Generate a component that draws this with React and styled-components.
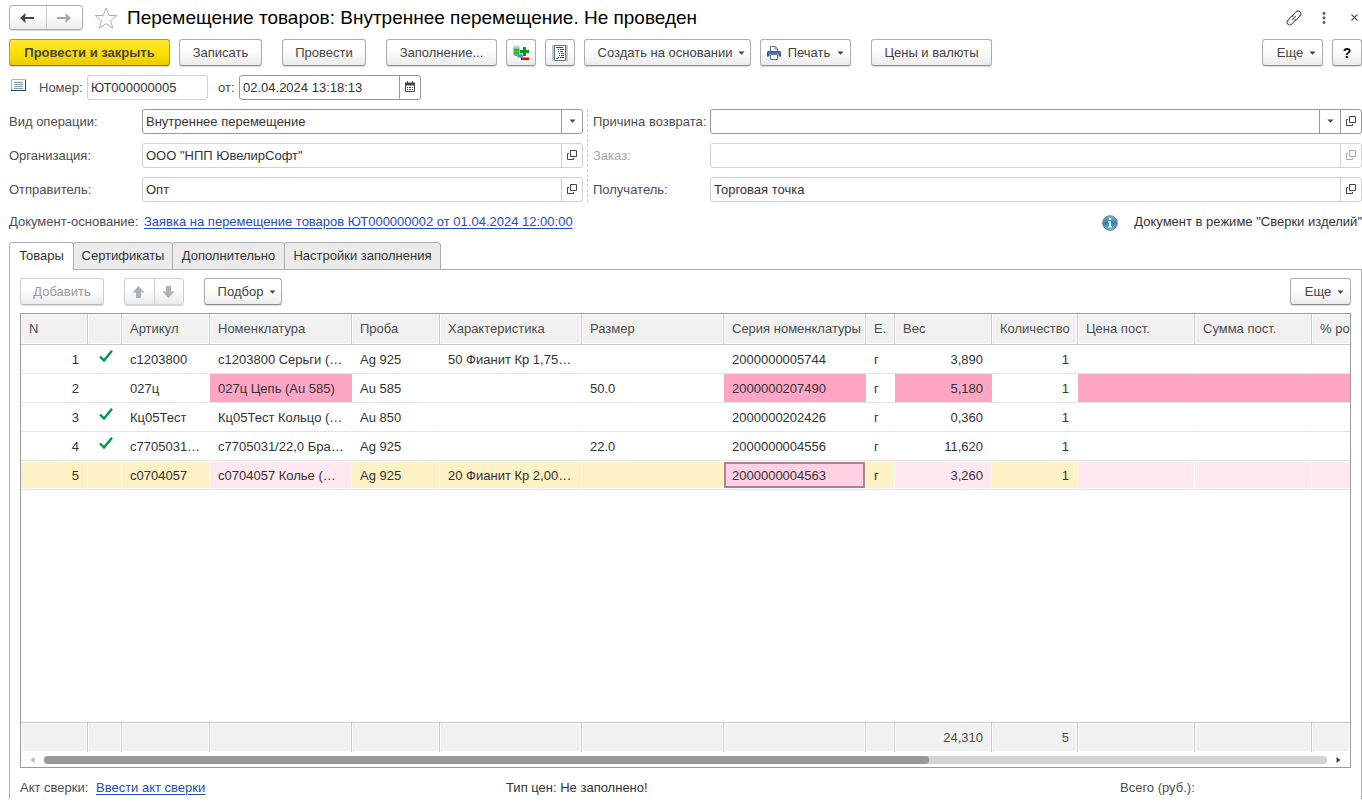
import styled, { createGlobalStyle, css } from "styled-components";

const GlobalStyle = createGlobalStyle`
	* {
		box-sizing: border-box;
	}
	body {
		margin: 0;
		background: #fff;
		color: #333;
		font-family: "Liberation Sans", Arial, sans-serif;
		font-size: 13px;
		line-height: 16px;
	}
	button, input, select {
		font: inherit;
		color: inherit;
		margin: 0;
	}
	svg {
		display: block;
		flex: none;
	}
`;

const Page = styled.main`
	min-height: 100vh;
	display: flex;
	flex-direction: column;
	padding: 5px 0 9px 9px;
`;

const TitleBar = styled.header`
	display: flex;
	align-items: center;
	height: 25px;
`;

const Title = styled.h1`
	flex: 1;
	margin: 0 0 0 9px;
	color: #000;
	font-size: 19px;
	line-height: 24px;
	font-weight: 400;
	white-space: nowrap;
`;

const IconButton = styled.button`
	display: flex;
	align-items: center;
	justify-content: center;
	width: 30px;
	height: 24px;
	padding: 0;
	border: 0;
	background: none;
`;

const StarButton = styled(IconButton)`
	width: 24px;
	margin-left: 11px;
`;

const CloseButton = styled(IconButton)`
	width: 23px;
	padding-left: 7px;
`;

const Bar = styled.div`
	display: flex;
	gap: 9px;
	margin-top: ${(props) => props.$top}px;
`;

const buttonLook = css`
	border: 1px solid #adadad;
	border-bottom-color: #8f8f8f;
	border-radius: 3px;
	background: linear-gradient(#fff 40%, #ebebeb);
	box-shadow: 0 1px 1px rgba(0, 0, 0, 0.15);
`;

const Button = styled.button`
	${buttonLook}
	display: flex;
	align-items: center;
	justify-content: center;
	gap: 7px;
	width: ${(props) => props.$width}px;
	height: 27px;
	padding: 0;
	color: #444;
	white-space: nowrap;
	margin-left: ${(props) => (props.$apart ? "11px" : props.$end ? "auto" : "0")};
	&:disabled {
		color: #9a9a9a;
		border-color: #cfcfcf;
		border-bottom-color: #bbb;
	}
`;

const MenuButton = styled(Button)`
	gap: 6px;
	padding-left: 8px;
`;

const MainButton = styled(Button)`
	border-color: #b8a000;
	border-bottom-color: #8d7c00;
	background: linear-gradient(#ffe838, #ffe100 50%, #e8cb00);
	font-weight: 700;
`;

const HelpButton = styled(Button)`
	color: #000;
	font-size: 14px;
	font-weight: 700;
`;

const Pair = styled.div`
	${buttonLook}
	display: flex;
	height: ${(props) => props.$height}px;
	margin-left: ${(props) => (props.$apart ? "11px" : "0")};
	border-color: ${(props) => (props.$pale ? "#cfcfcf" : "#adadad")};
`;

const PairButton = styled.button`
	display: flex;
	align-items: center;
	justify-content: center;
	width: ${(props) => props.$width}px;
	padding: 0 2px 0 0;
	border: 0;
	background: none;
	& + & {
		border-left: 1px solid #cfcfcf;
	}
`;

const NumberRow = styled.div`
	display: flex;
	align-items: center;
	margin-top: 9px;
	padding-left: 2px;
	> svg {
		align-self: flex-start;
		margin-top: 4px;
	}
`;

const Label = styled.label`
	color: ${(props) => (props.$off ? "#a6a6a6" : "#4d4d4d")};
	white-space: nowrap;
`;

const NumberLabel = styled(Label)`
	width: ${(props) => props.$width}px;
	margin-left: ${(props) => props.$left}px;
`;

const Box = styled.div`
	display: flex;
	width: ${(props) => (props.$width ? props.$width + "px" : "auto")};
	height: 25px;
	flex: ${(props) => (props.$width ? "none" : "1")};
	min-width: 0;
	border: 1px solid ${(props) => (props.$strong ? "#999" : "#d0d0d0")};
	border-radius: 3px;
	background: #fff;
	input, select {
		flex: 1;
		min-width: 0;
		width: 100%;
		padding: 0 3px;
		border: 0;
		outline: 0;
		background: none;
		appearance: none;
	}
	> button, > span {
		display: flex;
		align-items: center;
		justify-content: center;
		width: 21px;
		padding: 0 0 2px;
		border: 0;
		border-left: 1px solid ${(props) => (props.$strong ? "#999" : "#d0d0d0")};
		background: none;
		color: #444;
	}
	> button:disabled {
		color: #a6a6a6;
	}
`;

const Form = styled.section`
	display: grid;
	grid-template-columns: 574fr 775fr;
	column-gap: 4px;
	margin-top: 9px;
`;

const FormColumn = styled.div`
	display: flex;
	flex-direction: column;
	gap: 9px;
	& + & {
		padding-left: 5px;
		border-left: 1px dashed #ccc;
	}
`;

const FormRow = styled.div`
	display: flex;
	align-items: center;
	${Label} {
		width: ${(props) => props.$label}px;
	}
`;

const BasisRow = styled.div`
	display: flex;
	align-items: center;
	height: 18px;
	margin-top: 11px;
`;

const BasisLabel = styled.span`
	width: 135px;
	color: #4d4d4d;
`;

const Link = styled.a`
	color: #1f4fb0;
	text-underline-offset: 2px;
`;

const Mode = styled.div`
	display: flex;
	align-items: center;
	gap: 16px;
	margin-left: auto;
	svg {
		margin-top: 2px;
	}
`;

const Tabs = styled.div`
	display: flex;
	margin-top: 11px;
`;

const Tab = styled.button`
	position: relative;
	width: ${(props) => props.$width}px;
	height: 28px;
	margin-right: -1px;
	margin-bottom: -1px;
	padding: 0;
	border: 1px solid #adadad;
	border-radius: 3px 3px 0 0;
	background: #ebebeb;
	white-space: nowrap;
	&[aria-selected="true"] {
		background: #fff;
		border-bottom-color: #fff;
	}
`;

const Panel = styled.section`
	flex: 1;
	display: flex;
	flex-direction: column;
	min-width: 0;
	padding: 0 10px;
	border: 1px solid #adadad;
	border-bottom: 0;
`;

const Frame = styled.div`
	flex: 1;
	display: flex;
	flex-direction: column;
	margin-top: 8px;
	border: 1px solid #999;
`;

const Clip = styled.div`
	flex: 1;
	display: grid;
	grid-template-columns: minmax(0, 1fr);
	overflow: hidden;
`;

const Table = styled.table`
	table-layout: fixed;
	width: 100%;
	height: 100%;
	border-collapse: separate;
	border-spacing: 0;
`;

const cellText = css`
	padding: 0 ${(props) => (props.$right ? 8 : 4)}px 0 8px;
	text-align: ${(props) => (props.$right ? "right" : "left")};
	font-weight: 400;
	white-space: nowrap;
	overflow: hidden;
	text-overflow: ellipsis;
`;

const Th = styled.th`
	${cellText}
	height: 31px;
	padding-right: 0;
	color: #4d4d4d;
	background: #f1f1f1;
	border-right: 1px solid #c8c8c8;
	border-bottom: 1px solid #c8c8c8;
	box-shadow: inset 0 0 0 1px #fff;
	text-align: left;
	text-overflow: clip;
	&:last-child {
		border-right: 0;
	}
`;

const tones = {
	alarm: css`
		background: #ffa6c5;
		border-right-color: #ffa6c5;
	`,
	selected: css`
		background: #fdf1c6;
		box-shadow: inset 0 1px #fff, inset 0 -1px #fff;
	`,
	faint: css`
		background: #ffe8f0;
		box-shadow: inset 0 1px #fff, inset 0 -1px #fff;
	`,
	active: css`
		background: #ffd1e2;
		box-shadow: inset 0 1px #fff, inset 0 -1px #fff, inset 0 3px #b07f92,
			inset 0 -3px #b07f92, inset 2px 0 #b07f92, inset -2px 0 #b07f92;
	`,
};

const Td = styled.td`
	${cellText}
	height: 29px;
	padding-top: 2px;
	border-right: 1px solid #fff;
	border-bottom: 1px solid #e3e3e3;
	${(props) => tones[props.$tone]}
	&:last-child {
		border-right: 0;
	}
	svg {
		margin: 0 0 8px 3px;
	}
`;

const Total = styled.td`
	${cellText}
	height: 30px;
	color: #4d4d4d;
	background: #f1f1f1;
	border-top: 1px solid #c8c8c8;
	border-right: 1px solid #c8c8c8;
	box-shadow: inset 0 0 0 1px #fff;
	&:last-child {
		border-right: 0;
	}
`;

const Scroll = styled.div`
	display: flex;
	align-items: center;
	gap: 9px;
	height: 15px;
	padding: 0 9px;
`;

const Track = styled.div`
	flex: 1;
	height: 8px;
	border-radius: 4px;
	background: #d4d4d4;
`;

const Thumb = styled.div`
	width: 69%;
	height: 8px;
	border-radius: 4px;
	background: #999;
`;

const Summary = styled.footer`
	display: grid;
	grid-template-columns: 486fr 614fr 231fr;
	align-items: center;
	height: 31px;
	padding-top: 8px;
	color: #4d4d4d;
	white-space: nowrap;
	a {
		margin-left: 4px;
	}
`;

const Dark = styled.span`
	color: #333;
`;

const Caret = () => (
	<svg width="7" height="4" viewBox="0 0 7 4">
		<path d="M0.5 0.5h6L3.5 3.7z" fill="#444" />
	</svg>
);

const Arrow = ({ color, flip }) => (
	<svg width="16" height="12" viewBox="0 0 16 12">
		<path
			transform={flip ? "rotate(180 8 6)" : undefined}
			d="M1 6L6.5 1v3.2L5.5 5H15v2H5.5l1 0.8V11z"
			fill={color}
		/>
	</svg>
);

const MoveArrow = ({ flip }) => (
	<svg width="13" height="12" viewBox="0 0 13 12">
		<path transform={flip ? "rotate(180 6.5 6)" : undefined} d="M6.5 0L12.5 6.5H9V12H4V6.5H0.5z" fill="#a9b3b9" />
	</svg>
);

const Star = () => (
	<svg width="24" height="22" viewBox="0 0 24 22">
		<path d="M12 1l2.8 7.5h8l-6.3 5 2.3 7.7L12 16.6 5.2 21.2l2.3-7.7-6.3-5h8z" fill="#fff" stroke="#aab0b6" />
	</svg>
);

const Chain = () => (
	<svg width="16" height="16" viewBox="0 0 16 16" fill="none" stroke="#555" strokeWidth="1.1" strokeLinecap="round">
		<path d="M6 6.3L10 2c1.1-1.2 2.8-1.3 4-0.2s1.2 2.7 0.1 3.9L10.8 9.3c-0.5 0.5-1.1 0.8-1.8 0.8" />
		<path d="M10 9.7L6 14c-1.1 1.2-2.8 1.3-4 0.2s-1.2-2.7-0.1-3.9L5.2 6.7c0.5-0.5 1.1-0.8 1.8-0.8" />
		<path d="M6.5 9.7l3-3.3" />
	</svg>
);

const Dots = () => (
	<svg width="4" height="12" viewBox="0 0 4 12" fill="#555">
		<circle cx="2" cy="1.5" r="1.4" />
		<circle cx="2" cy="6" r="1.4" />
		<circle cx="2" cy="10.5" r="1.4" />
	</svg>
);

const Cross = () => (
	<svg width="7" height="7" viewBox="0 0 7 7">
		<path d="M0.5 0.5l6 6m0-6l-6 6" stroke="#555" strokeWidth="1.1" />
	</svg>
);

const PlusMinus = () => (
	<svg width="16" height="16" viewBox="0 0 16 16">
		<path d="M0.5 2v8c0 1.5 6 1.5 6 0V2z" fill="#4cc35a" />
		<path d="M0.5 5h6M0.5 8h6" stroke="#2a9c3a" />
		<ellipse cx="3.5" cy="2" rx="3" ry="1.6" fill="#9be8a2" />
		<path d="M10 2h3v3h3v3h-3v3h-3V8H7V5h3z" fill="#009c1a" />
		<path d="M4.500 9.500h3V8l3 3-3 3v-1.500h-3z" fill="#4f8fd0" />
		<path d="M8 12.5h8V15H8z" fill="#f00000" />
	</svg>
);

const Listing = () => (
	<svg width="16" height="16" viewBox="0 0 16 16">
		<path d="M0 0h16v16H0z" fill="#c6c6c6" />
		<path d="M2.5 0.5h11v15h-11z" fill="#fff" stroke="#5f7482" />
		<path
			d="M4 2.5h7M6 4.5h1M8 4.5h4M6 6.5h1M8 6.5h3M7 8.5h1M9 8.5h3M7 10.5h1M9 10.5h3M6 12.5h1M8 12.5h4M4 13.5h2"
			stroke="#14547f"
			strokeWidth="1.2"
		/>
	</svg>
);

const Printer = () => (
	<svg width="14" height="14" viewBox="0 0 14 14">
		<path d="M3.5 5V0.5h4.8l2.2 2.2V5" fill="#fff" stroke="#5a7a9a" />
		<path d="M8 0.5V3h2.5" fill="none" stroke="#5a7a9a" />
		<path d="M1 5h12l1 1v4.5h-2.5V8h-9v2.5H0V6z" fill="#2e5f8c" />
		<path d="M1 7h12" stroke="#6b93b8" />
		<path d="M3.5 8.5h7v5h-7z" fill="#fff" stroke="#5a7a9a" />
	</svg>
);

const Sheet = () => (
	<svg width="15" height="12" viewBox="0 0 15 12">
		<path d="M0.5 0.5h14v11h-14z" fill="#fff" stroke="#9fb4c6" />
		<path d="M14.5 1v10.5H0" fill="none" stroke="#33454f" />
		<path d="M3 3.5h9M3 5.5h9M3 7.5h9M3 9.5h9" stroke="#7d9cb5" />
	</svg>
);

const Calendar = () => (
	<svg width="10" height="11" viewBox="0 0 10 11">
		<path d="M0.5 2.5h9v8h-9z" fill="#fff" stroke="#444" />
		<path d="M0 1.5h10v3H0zM2 0h1v2H2zM7 0h1v2H7z" fill="#444" />
		<path d="M2 6.5h1m1 0h2m1 0h1M2 8.5h1m1 0h2m1 0h1" stroke="#444" />
	</svg>
);

const Open = () => (
	<svg width="10" height="10" viewBox="0 0 10 10" fill="none" stroke="currentColor">
		<path d="M3.5 0.5h6v6h-6z" />
		<path d="M2 3.5H0.5v6h6V8" />
	</svg>
);

const Info = () => (
	<svg width="16" height="16" viewBox="0 0 16 16">
		<defs>
			<linearGradient id="info" x1="0" y1="0" x2="0" y2="1">
				<stop offset="0" stopColor="#7fb9e4" />
				<stop offset="0.5" stopColor="#2f7fba" />
				<stop offset="1" stopColor="#6fc0ea" />
			</linearGradient>
		</defs>
		<circle cx="8" cy="8" r="7.3" fill="url(#info)" stroke="#6f7c86" />
		<path d="M7 3h2v2H7zM6 6.5h3v5h1v1H6v-1h1v-4H6z" fill="#fff" />
	</svg>
);

const Check = () => (
	<svg width="14" height="12" viewBox="0 0 14 12">
		<path d="M1 6.5l4 4L13 0.8" fill="none" stroke="#00964a" strokeWidth="2.4" />
	</svg>
);

const ScrollArrow = ({ color, left }) => (
	<svg width="5" height="6" viewBox="0 0 5 6">
		<path d={left ? "M4.5 0v6L0.5 3z" : "M0.5 0v6l4-3z"} fill={color} />
	</svg>
);

// the last column takes whatever width is left
const columns = [
	{ title: "N", width: 67, right: true },
	{ title: "", width: 34 },
	{ title: "Артикул", width: 88 },
	{ title: "Номенклатура", width: 142 },
	{ title: "Проба", width: 88 },
	{ title: "Характеристика", width: 142 },
	{ title: "Размер", width: 142 },
	{ title: "Серия номенклатуры", width: 142 },
	{ title: "Е.", width: 29 },
	{ title: "Вес", width: 97, right: true, total: "24,310" },
	{ title: "Количество", width: 86, right: true, total: "5" },
	{ title: "Цена пост.", width: 117 },
	{ title: "Сумма пост.", width: 117 },
	{ title: "% ро" },
];

const rows = [
	["1", true, "с1203800", "с1203800 Серьги (…", "Ag 925", "50 Фианит Кр 1,75…", "", "2000000005744", "г", "3,890", "1", "", "", ""],
	["2", false, "027ц", "027ц Цепь (Au 585)", "Au 585", "", "50.0", "2000000207490", "г", "5,180", "1", "", "", ""],
	["3", true, "Кц05Тест", "Кц05Тест Кольцо (…", "Au 850", "", "", "2000000202426", "г", "0,360", "1", "", "", ""],
	["4", true, "с7705031…", "с7705031/22,0 Бра…", "Ag 925", "", "22.0", "2000000004556", "г", "11,620", "1", "", "", ""],
	["5", false, "с0704057", "с0704057 Колье (…", "Ag 925", "20 Фианит Кр 2,00…", "", "2000000004563", "г", "3,260", "1", "", "", ""],
];

const marked = [3, 7, 9, 11, 12, 13];

const toneOf = (row, col) => {
	if (row === 1) return marked.includes(col) ? "alarm" : undefined;
	if (row === 4) {
		if (col === 7) return "active";
		return marked.includes(col) ? "faint" : "selected";
	}
};

const Goods = () => (
	<Table>
		<colgroup>
			{columns.map((column, i) => (
				<col key={i} width={column.width} />
			))}
		</colgroup>
		<thead>
			<tr>
				{columns.map((column, i) => (
					<Th key={i}>{column.title}</Th>
				))}
			</tr>
		</thead>
		<tbody>
			{rows.map((row, r) => (
				<tr key={r}>
					{row.map((value, c) => (
						<Td key={c} $right={columns[c].right} $tone={toneOf(r, c)}>
							{value === true ? <Check /> : value}
						</Td>
					))}
				</tr>
			))}
			<tr>
				<td colSpan={columns.length} />
			</tr>
		</tbody>
		<tfoot>
			<tr>
				{columns.map((column, i) => (
					<Total key={i} $right={column.right}>{column.total}</Total>
				))}
			</tr>
		</tfoot>
	</Table>
);

const Field = ({ id, label, value = "", select, open, strong, off, labelWidth }) => (
	<FormRow $label={labelWidth}>
		<Label htmlFor={id} $off={off}>{label}</Label>
		<Box $strong={strong}>
			{select ? (
				<select id={id} defaultValue={value}>
					<option value={value}>{value}</option>
				</select>
			) : (
				<input id={id} type="text" defaultValue={value} disabled={off} />
			)}
			{select && <span><Caret /></span>}
			{open && <button type="button" aria-label="Открыть" disabled={off}><Open /></button>}
		</Box>
	</FormRow>
);

const App = () => {
	return (
		<Page>
			<GlobalStyle />
			<TitleBar>
				<Pair $height={25}>
					<PairButton $width={36} aria-label="Назад"><Arrow color="#444" /></PairButton>
					<PairButton $width={36} aria-label="Вперед"><Arrow color="#a6a6a6" flip /></PairButton>
				</Pair>
				<StarButton aria-label="В избранное"><Star /></StarButton>
				<Title>Перемещение товаров: Внутреннее перемещение. Не проведен</Title>
				<IconButton aria-label="Ссылка"><Chain /></IconButton>
				<IconButton aria-label="Меню"><Dots /></IconButton>
				<CloseButton aria-label="Закрыть"><Cross /></CloseButton>
			</TitleBar>

			<Bar $top={9}>
				<MainButton $width={161}>Провести и закрыть</MainButton>
				<Button $width={83}>Записать</Button>
				<Button $width={84} $apart>Провести</Button>
				<Button $width={111} $apart>Заполнение...</Button>
				<Button $width={30} aria-label="Изменить состав"><PlusMinus /></Button>
				<Button $width={30} aria-label="Структура"><Listing /></Button>
				<MenuButton $width={167}>Создать на основании <Caret /></MenuButton>
				<Button $width={91}><Printer /> Печать <Caret /></Button>
				<Button $width={121} $apart>Цены и валюты</Button>
				<MenuButton $width={61} $end>Еще <Caret /></MenuButton>
				<HelpButton $width={30}>?</HelpButton>
			</Bar>

			<NumberRow>
				<Sheet />
				<NumberLabel htmlFor="number" $left={13} $width={48}>Номер:</NumberLabel>
				<Box $width={121}>
					<input id="number" type="text" defaultValue="ЮТ000000005" />
				</Box>
				<NumberLabel htmlFor="date" $left={10} $width={21}>от:</NumberLabel>
				<Box $width={182} $strong>
					<input id="date" type="text" defaultValue="02.04.2024 13:18:13" />
					<button type="button" aria-label="Календарь"><Calendar /></button>
				</Box>
			</NumberRow>

			<Form>
				<FormColumn>
					<Field id="kind" label="Вид операции:" value="Внутреннее перемещение" labelWidth={133} select strong />
					<Field id="company" label="Организация:" value={'ООО "НПП ЮвелирСофт"'} labelWidth={133} open />
					<Field id="sender" label="Отправитель:" value="Опт" labelWidth={133} open />
				</FormColumn>
				<FormColumn>
					<Field id="reason" label="Причина возврата:" labelWidth={117} select open strong />
					<Field id="order" label="Заказ:" labelWidth={117} open off />
					<Field id="receiver" label="Получатель:" value="Торговая точка" labelWidth={117} open />
				</FormColumn>
			</Form>

			<BasisRow>
				<BasisLabel>Документ-основание:</BasisLabel>
				<Link href="#basis">Заявка на перемещение товаров ЮТ000000002 от 01.04.2024 12:00:00</Link>
				<Mode>
					<Info />
					<span>Документ в режиме "Сверки изделий"</span>
				</Mode>
			</BasisRow>

			<Tabs role="tablist">
				<Tab role="tab" aria-selected="true" $width={65}>Товары</Tab>
				<Tab role="tab" aria-selected="false" $width={100}>Сертификаты</Tab>
				<Tab role="tab" aria-selected="false" $width={113}>Дополнительно</Tab>
				<Tab role="tab" aria-selected="false" $width={157}>Настройки заполнения</Tab>
			</Tabs>
			<Panel role="tabpanel">
				<Bar $top={8}>
					<Button $width={84} disabled>Добавить</Button>
					<Pair $height={27} $apart $pale>
						<PairButton $width={29} aria-label="Вверх" disabled><MoveArrow /></PairButton>
						<PairButton $width={29} aria-label="Вниз" disabled><MoveArrow flip /></PairButton>
					</Pair>
					<MenuButton $width={78} $apart>Подбор <Caret /></MenuButton>
					<MenuButton $width={61} $end>Еще <Caret /></MenuButton>
				</Bar>
				<Frame>
					<Clip>
						<Goods />
					</Clip>
					<Scroll>
						<ScrollArrow color="#b5b5b5" left />
						<Track>
							<Thumb />
						</Track>
						<ScrollArrow color="#444" />
					</Scroll>
				</Frame>
				<Summary>
					<div>
						Акт сверки: <Link href="#act">Ввести акт сверки</Link>
					</div>
					<Dark>Тип цен: Не заполнено!</Dark>
					<span>Всего (руб.):</span>
				</Summary>
			</Panel>
		</Page>
	);
};

export default App;
